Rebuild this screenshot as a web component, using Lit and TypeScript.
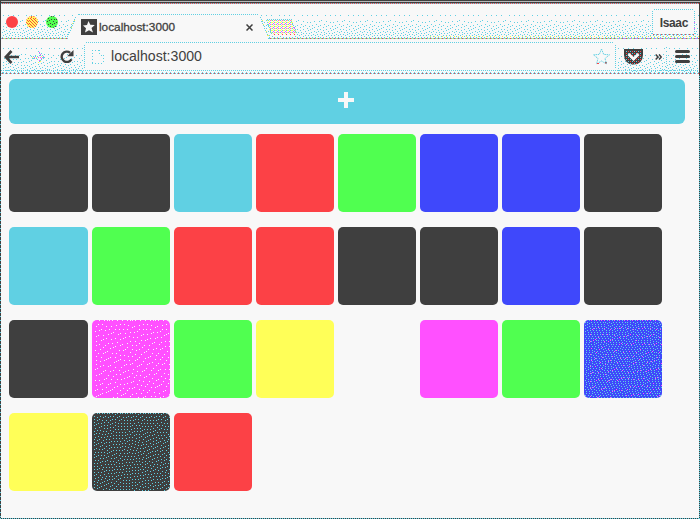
import { LitElement, html, svg, css } from "lit";
import { customElement, property } from "lit/decorators.js";
import { classMap } from "lit/directives/class-map.js";

/** One-pixel dots spread by error diffusion; density may vary by row. */
function dither(w: number, h: number, density: (y: number) => number): string {
  let d = "";
  let row = new Float64Array(w + 2);
  for (let x = 0; x < w + 2; x++) row[x] = ((x * 37) % 23) / 46;
  for (let y = 0; y < h; y++) {
    const next = new Float64Array(w + 2);
    for (let x = 1; x <= w; x++) {
      const v = row[x] + density(y);
      const on = v >= 0.5;
      if (on) d += `M${x - 1} ${y}h1v1h-1z`;
      const e = on ? v - 1 : v;
      row[x + 1] += (e * 7) / 16;
      next[x - 1] += (e * 3) / 16;
      next[x] += (e * 5) / 16;
      next[x + 1] += e / 16;
    }
    row = next;
  }
  return d;
}

const STRIP_DOTS = dither(698, 23, (y) => 0.01 + (y / 23) * 0.18);
const BAR_DOTS = dither(83, 25, (y) => 0.01 + (y / 25) * 0.16);

@customElement("window-frame-art")
export class WindowFrameArt extends LitElement {
  static styles = css`
    :host { display: block; }
    svg { display: block; }
    .c { fill: none; stroke: #60d0e3; stroke-dasharray: 1 1; }
    .sparse { stroke-dasharray: 1 3; }
    .fc { fill: #60d0e3; }
    .r { fill: none; stroke: #fc4146; stroke-dasharray: 1 3; }
    .y { fill: none; stroke: #f2f258; stroke-dasharray: 1 3; }
    .m { fill: none; stroke: #ff50ff; stroke-dasharray: 1 5; }
    .bg { fill: #f8f8f8; }
  `;
  render() {
    return html`<svg width="700" height="74" viewBox="0 0 700 74" shape-rendering="crispEdges">
      <defs>
        <pattern id="mix" width="4" height="4" patternUnits="userSpaceOnUse">
          <path fill="#60d0e3" d="M0 0h1v1h-1zM2 2h1v1h-1z" />
          <path fill="#ff50ff" d="M2 0h1v1h-1zM1 3h1v1h-1z" />
          <path fill="#ffff58" d="M1 1h1v1h-1zM3 2h1v1h-1zM0 2h1v1h-1zM3 0h1v1h-1z" />
        </pattern>
      </defs>
      <path class="fc" transform="translate(1 15)" d=${STRIP_DOTS} />
      <path class="fc" transform="translate(1 48)" d=${BAR_DOTS} />
      <path class="fc" transform="translate(616 48)" d=${BAR_DOTS} />
      <path class="bg" d="M66 39L75 18Q77 14 81 14H256Q259 14 261 18L269 39Z" />
      <path class="c" d="M79 14.500H257" />
      <path class="c" d="M67 38.500L75 19Q77 14.500 80 14.500M257 14.500Q260 16 261 19L269 38.500" />
      <path class="y" d="M71 28L75 19M262 20L269 38" />
      <path class="bg" d="M265 19H292L298 36H272Z" />
      <path fill="url(#mix)" d="M266 20H290Q292 20 293 22L297 34H273Q271 34 270 31Z" />
      <path class="c" d="M267 19.500H291M291 19.500L297 34M266 20L272 34" />
      <path class="r" d="M274 34.500H296" />
      <path class="c" d="M1 38.500H67M269 38.500H699" />
      <path class="r" d="M2 38.500H67M270 38.500H699" />
      <path class="y" d="M4 38.500H67M272 38.500H699M430 36.500H699" />
      <path class="m" d="M618 38.500H699" />
      <path class="bg" d="M85 43H615V73H85Z" />
      <path class="c" d="M86 42.500H613M84.500 45V69M615.500 45V69M1 70.500H699" />
      <path class="c sparse" d="M2 72.500H699" />
      <path class="c" d="M1 73.500H699" />
      <path class="r" stroke-dasharray="1 1" d="M2 73.500H699" />
      <rect class="bg" x="652" y="9" width="43" height="26" />
      <path class="c" d="M654 9.500H693M652.500 11V34M694.500 11V34M654 34.500H694" />
      <path class="r" d="M653 34.500H694" />
      <path class="m" d="M694.500 22V34" />
      <path class="c sparse" d="M666.500 47V71" />
    </svg>`;
  }
}

const DISC_DOTS = dither(12, 12, () => 0.34);
const SPARSE_DISC_DOTS = dither(12, 12, () => 0.14);

const ICONS = {
  red: svg`<circle cx="6" cy="6" r="6" fill="#fc4146"/>`,
  amber: svg`<clipPath id="a"><circle cx="6" cy="6" r="6"/></clipPath><circle cx="6" cy="6" r="6" fill="#ffff58"/><path clip-path="url(#a)" shape-rendering="crispEdges" fill="#fc4146" d=${DISC_DOTS}/>`,
  green: svg`<clipPath id="g"><circle cx="6" cy="6" r="6"/></clipPath><circle cx="6" cy="6" r="6" fill="#50ff50"/><path clip-path="url(#g)" shape-rendering="crispEdges" fill="#3f3f3f" d=${SPARSE_DISC_DOTS}/>`,
  favicon: svg`<rect width="16" height="16" fill="#3f3f3f"/><path fill="#f8f8f8" d="M7.500 2L9.300 5.800 13.800 6 10.500 8.900 12 13.500 8 11.200 4 13.500 5 9.200 2 6.400 6 5.900z"/>`,
  close: svg`<path d="M.5 .5L6.500 6.500M6.500 .5L.5 6.500" fill="none" stroke="#3f3f3f" stroke-width="1.500"/>`,
  back: svg`<path d="M7.500 1L1.800 7 7.500 13M2 7H15" fill="none" stroke="#3f3f3f" stroke-width="2.700"/>`,
  forward: svg`<g shape-rendering="crispEdges"><path fill="#60d0e3" d="M0 6h1v1h-1zM2 6h1v1h-1zM4 6h1v1h-1zM6 6h1v1h-1zM1 8h1v1h-1zM3 8h1v1h-1zM5 8h1v1h-1zM7 1h1v1h-1zM8 3h1v1h-1zM10 3h1v1h-1zM9 5h1v1h-1zM11 5h1v1h-1zM13 7h1v1h-1zM12 8h1v1h-1zM10 9h1v1h-1zM8 11h1v1h-1zM9 10h1v1h-1zM11 7h1v1h-1z"/><path fill="#ff50ff" d="M3 7h1v1h-1zM7 7h1v1h-1zM8 2h1v1h-1zM9 4h1v1h-1zM12 6h1v1h-1zM10 8h1v1h-1zM8 10h1v1h-1zM9 7h1v1h-1z"/><path fill="#ffff58" d="M5 7h1v1h-1zM1 7h1v1h-1zM10 6h1v1h-1zM9 11h1v1h-1zM7 12h1v1h-1z"/></g>`,
  reload: svg`<path d="M11.500 9.200A5.200 5.200 0 1 1 10.200 2.800" fill="none" stroke="#3f3f3f" stroke-width="2.400"/><path d="M13.500 0V6.300H7.200z" fill="#3f3f3f"/>`,
  page: svg`<g shape-rendering="crispEdges" fill="none" stroke="#60d0e3"><path stroke-dasharray="1 2" d="M0 .5H8M.5 0V13M7.500 0V5H12M11.500 5V13M0 13.500H12"/></g>`,
  star: svg`<path d="M8.500 1L10.700 6.400 16.500 6.800 12 10.500 13.500 16 8.500 13 3.500 16 5 10.500 .5 6.800 6.300 6.400Z" fill="none" stroke="#60d0e3" stroke-dasharray="1.400 .8"/><path d="M4 15.500h2M12 15h1.500" stroke="#fc4146"/><path d="M12.500 14.500h1" stroke="#3f3f3f"/>`,
  pocket: svg`<defs><pattern id="p" width="4" height="4" patternUnits="userSpaceOnUse"><path d="M0 0h1v1h-1zM2 2h1v1h-1z" fill="#60d0e3"/><path d="M2 0h1v1h-1zM0 2h1v1h-1z" fill="#fc4146"/></pattern></defs><path d="M0 0H19V6Q18.500 15.500 9.500 15.500Q.5 15.500 0 6Z" fill="#3f3f3f"/><path d="M1 2H18V6Q17.500 15 9.500 15Q1.500 15 1 6Z" fill="url(#p)" shape-rendering="crispEdges"/><path d="M4.500 5L9.500 10 14.500 5" fill="none" stroke="#f8f8f8" stroke-width="3"/>`,
  chevrons: svg`<path d="M.7 .5L3 3 .7 5.500M4 .5L6.300 3 4 5.500" fill="none" stroke="#3f3f3f" stroke-width="1.500"/>`,
  menu: svg`<path d="M1.500 1.500H13.500M1.500 6.500H13.500M1.500 11.500H13.500" stroke="#3f3f3f" stroke-width="3" stroke-linecap="round"/>`,
  plus: svg`<path fill="#f8f8f8" d="M6 0H10V6H16V10H10V16H6V10H0V6H6Z"/>`,
};

@customElement("ui-icon")
export class UiIcon extends LitElement {
  @property() name: keyof typeof ICONS = "plus";
  @property({ type: Number }) w = 16;
  @property({ type: Number }) h = 16;
  static styles = css`:host { display: block; flex: none; } svg { display: block; }`;
  render() {
    return html`<svg width=${this.w} height=${this.h} viewBox="0 0 ${this.w} ${this.h}">${ICONS[this.name]}</svg>`;
  }
}

const TILES = [
  "dark", "dark", "cyan", "red", "green", "blue", "blue", "dark",
  "cyan", "green", "red", "red", "dark", "dark", "blue", "dark",
  "dark", "magenta dots", "green", "yellow", "blank", "magenta", "green", "blue dots",
  "yellow", "dark dots", "red",
];
const MAGENTA_DOTS = dither(80, 79, () => 0.055);
const DARK_DOTS = dither(80, 79, () => 0.11);
const BLUE_DOTS = dither(80, 79, () => 0.17);
const BLUE_ACCENTS = dither(80, 79, () => 0.03);

@customElement("app-root")
export class AppRoot extends LitElement {
  static styles = css`
    :host { display: block; font-family: "Liberation Sans", Arial, sans-serif; color: #3f3f3f; }
    .window {
      position: relative; box-sizing: border-box; width: 700px; height: 519px; overflow: hidden; background: #f8f8f8;
      display: flex; flex-direction: column;
    }
    .art { position: absolute; inset: 0 auto auto 0; }
    .edge { position: absolute; inset: 0; pointer-events: none; }
    .tabs, .toolbar { position: relative; display: flex; align-items: center; box-sizing: border-box; flex: none; }
    .tabs { height: 39px; padding: 15px 12px 0 6px; }
    .lights { display: flex; gap: 8px; width: 75px; margin-top: -10px; }
    .title { font-size: 11.800px; line-height: 16px; width: 147px; padding-left: 2px; -webkit-text-stroke: .3px #3f3f3f; margin-top: -1px; }
    .user { margin-left: auto; font-size: 12px; font-weight: 700; line-height: 16px; margin-top: -8px; letter-spacing: -.35px; }
    .toolbar { height: 35px; padding: 0 10px 0 4px; }
    .forward { margin-left: 12px; }
    .reload { margin-left: 15px; }
    .pocket { margin-left: 14px; }
    .chevrons { margin-left: 12px; }
    .menu { margin-left: auto; }
    .address { display: flex; align-items: center; margin-left: 18px; width: 518px; }
    .url { font-size: 14.100px; line-height: 20px; margin: -1px 0 0 7px; flex: 1; }
    .content { padding: 5px 15px 0 9px; }
    .add { height: 45px; border-radius: 6px; background: #60d0e3; display: flex; justify-content: center; align-items: center; width: 676px; }
    .add ui-icon { margin: -3px 2px 0 0; }
    .grid { display: grid; grid-template-columns: 79px repeat(7, 78px); grid-auto-rows: 78.500px; column-gap: 4px; row-gap: 14.600px; margin-top: 9.500px; }
    .tile { border-radius: 5px; overflow: hidden; }
    .tile svg { display: block; }
    .dark { background: #3f3f3f; }
    .cyan { background: #60d0e3; }
    .red { background: #fc4146; }
    .green { background: #50ff50; }
    .blue { background: #3f48fb; }
    .magenta { background: #ff50ff; }
    .yellow { background: #ffff58; }
  `;

  private tile(kind: string) {
    const [color, extra] = kind.split(" ");
    const dots = color === "magenta" ? MAGENTA_DOTS : color === "dark" ? DARK_DOTS : BLUE_DOTS;
    return html`<div class=${classMap({ tile: true, [color]: true })}>
      ${extra === "dots"
        ? html`<svg width="79" height="79" shape-rendering="crispEdges">
            <path d=${dots} fill=${color === "magenta" ? "#f8f8f8" : "#60d0e3"} />
            <path d=${color === "blue" ? BLUE_ACCENTS : ""} fill="#ff50ff" />
          </svg>`
        : null}
    </div>`;
  }

  render() {
    return html`<div class="window">
      <window-frame-art class="art"></window-frame-art>
      <div class="tabs">
        <div class="lights">
          <ui-icon name="red" w="12" h="12"></ui-icon>
          <ui-icon name="amber" w="12" h="12"></ui-icon>
          <ui-icon name="green" w="12" h="12"></ui-icon>
        </div>
        <ui-icon name="favicon"></ui-icon>
        <span class="title">localhost:3000</span>
        <ui-icon name="close" w="7" h="7"></ui-icon>
        <span class="user">Isaac</span>
      </div>
      <div class="toolbar">
        <ui-icon name="back" w="15" h="14"></ui-icon>
        <ui-icon class="forward" name="forward" w="14" h="14"></ui-icon>
        <ui-icon class="reload" name="reload" w="14" h="13"></ui-icon>
        <div class="address">
          <ui-icon name="page" w="12" h="14"></ui-icon>
          <span class="url">localhost:3000</span>
          <ui-icon name="star" w="17" h="17"></ui-icon>
        </div>
        <ui-icon class="pocket" name="pocket" w="19" h="16"></ui-icon>
        <ui-icon class="chevrons" name="chevrons" w="7" h="6"></ui-icon>
        <ui-icon class="menu" name="menu" w="15" h="13"></ui-icon>
      </div>
      <div class="content">
        <div class="add"><ui-icon name="plus"></ui-icon></div>
        <div class="grid">${TILES.map((t) => this.tile(t))}</div>
      </div>
      <svg class="edge" width="700" height="519" shape-rendering="crispEdges" fill="none">
        <path stroke="#3f3f3f" d="M0 .5H700M0 2.500H700M.5 0V519M699.500 2V519M0 518.500H700" />
        <path stroke="#b8b8b8" d="M1 1.500H700" />
        <path stroke="#fc4146" stroke-dasharray="1 1" d="M2 3.500H699" />
        <path stroke="#60d0e3" stroke-dasharray="1 1" d="M1 3.500H699M699.500 76V519M0 518.500H700" />
        <path stroke="#60d0e3" stroke-dasharray="1 3" d="M.5 76V519" />
      </svg>
    </div>`;
  }
}
